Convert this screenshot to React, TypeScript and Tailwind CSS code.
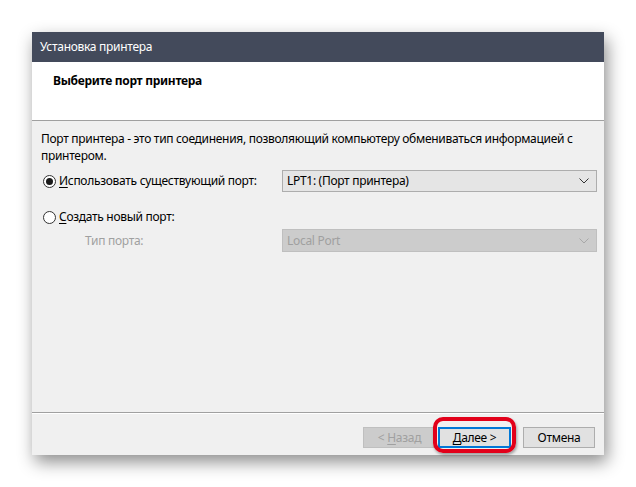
import React from 'react';

const font = { fontFamily: '"Noto Sans", "Open Sans", sans-serif' };

const Chevron: React.FC<{ color: string }> = ({ color }) => (
    <svg width="10" height="6" viewBox="0 0 10 6" className="shrink-0">
        <polyline points="0.5,0.5 5,5 9.5,0.5" fill="none" stroke={color} strokeWidth="1" />
    </svg>
);

const Radio: React.FC<{ checked?: boolean }> = ({ checked }) => (
    <span className="w-[13px] h-[13px] rounded-full border border-[#333333] bg-white flex items-center justify-center shrink-0">
        {checked && <span className="w-[7px] h-[7px] rounded-full bg-[#1a1a1a]"></span>}
    </span>
);

export default function App() {
    return (
        <div className="w-[636px] h-[487px] bg-white pl-8 pt-8 text-[12px] tracking-[-0.3px] text-black" style={font}>
            <div className="relative w-[572px] h-[423px] flex flex-col bg-[#f0f0f0] shadow-[3px_7px_16px_rgba(0,0,0,0.45)]">
                {/* Title bar */}
                <div className="h-[30px] bg-[#434a5b] text-white flex items-center pl-2 shrink-0">
                    Установка принтера
                </div>

                {/* Header */}
                <div className="h-[59px] bg-white border-b border-[#a0a0a0] pl-[21px] pt-[10px] shrink-0">
                    <span className="font-bold">Выберите порт принтера</span>
                </div>

                {/* Body */}
                <div className="flex-1 pl-[9px] pr-[7px] pt-[9px] flex flex-col">
                    <p className="leading-[17px] whitespace-nowrap">
                        Порт принтера - это тип соединения, позволяющий компьютеру обмениваться информацией с
                        <br />
                        принтером.
                    </p>

                    <div className="mt-[6px] h-[22px] flex items-center">
                        <div className="w-[241px] flex items-center gap-[3px] pl-[2px]">
                            <Radio checked />
                            <span>
                                <u className="underline-offset-2">И</u>спользовать существующий порт:
                            </span>
                        </div>
                        <div className="flex-1 h-[22px] bg-[#e5e5e5] border border-[#adadad] flex items-center justify-between pl-[4px] pr-[7px]">
                            <span>LPT1: (Порт принтера)</span>
                            <Chevron color="#333333" />
                        </div>
                    </div>

                    <div className="mt-[17px] h-[16px] flex items-center gap-[3px] pl-[2px]">
                        <Radio />
                        <span>
                            <u className="underline-offset-2">С</u>оздать новый порт:
                        </span>
                    </div>

                    <div className="mt-[4px] h-[23px] flex items-center">
                        <div className="w-[241px] pl-[44px] text-[#a0a0a0]">Тип порта:</div>
                        <div className="flex-1 h-[23px] bg-[#cccccc] border border-[#bfbfbf] flex items-center justify-between pl-[4px] pr-[7px] text-[#a0a0a0]">
                            <span>Local Port</span>
                            <Chevron color="#a8a8a8" />
                        </div>
                    </div>
                </div>

                {/* Footer */}
                <div className="h-[43px] border-t border-[#a0a0a0] shrink-0">
                    <div className="h-full border-t border-white flex items-start justify-end pt-[13px] pr-[9px]">
                        <div className="w-[73px] h-[21px] bg-[#cccccc] border border-[#bfbfbf] text-[#a0a0a0] flex items-center justify-center">
                            &lt;&nbsp;<u className="underline-offset-2">Н</u>азад
                        </div>
                        <div className="ml-[2px] w-[73px] h-[21px] bg-[#e1e1e1] border-2 border-[#0078d7] flex items-center justify-center">
                            <u className="underline-offset-2">Д</u>алее &gt;
                        </div>
                        <div className="ml-[12px] w-[72px] h-[21px] bg-[#e1e1e1] border border-[#adadad] flex items-center justify-center">
                            Отмена
                        </div>
                    </div>
                </div>

                {/* Red highlight ring */}
                <div className="absolute left-[401px] top-[385px] w-[83px] h-[36px] border-4 border-[#e2001a] rounded-[10px] shadow-[1px_2px_3px_rgba(0,0,0,0.35)]"></div>
            </div>
        </div>
    );
}
